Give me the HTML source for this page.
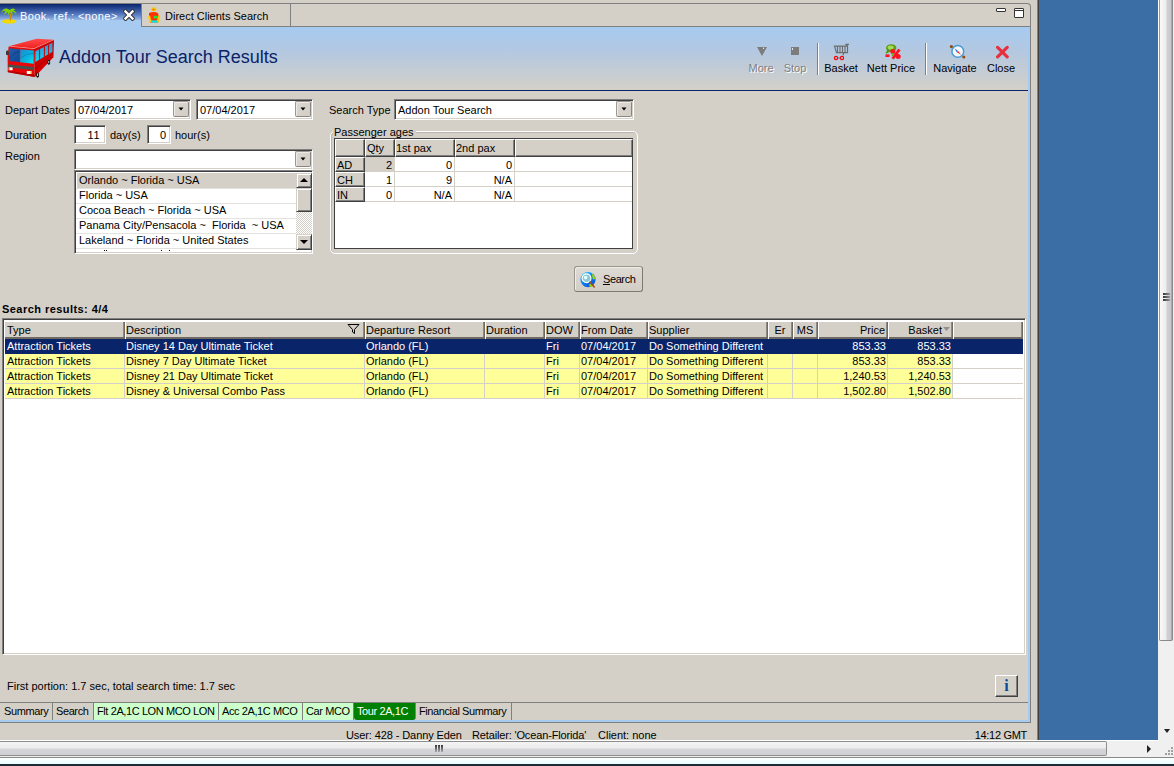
<!DOCTYPE html>
<html><head><meta charset="utf-8"><style>
*{margin:0;padding:0;box-sizing:border-box}
html,body{width:1174px;height:766px;overflow:hidden}
body{background:#D4D0C8;font-family:"Liberation Sans",sans-serif;font-size:11px;color:#000;position:relative}
.a{position:absolute}
.t{position:absolute;white-space:nowrap;line-height:13px}
</style></head><body>
<div class="a" style="left:1037px;top:0px;width:1px;height:766px;background:#808080"></div>
<div class="a" style="left:1038px;top:0px;width:1px;height:740px;background:#404040"></div>
<div class="a" style="left:1039px;top:0px;width:119px;height:740px;background:#3A6EA5"></div>
<div class="a" style="left:1158px;top:0px;width:16px;height:741px;background:#F0F0F0"></div>
<div class="a" style="left:1158px;top:0px;width:1px;height:640px;background:#fff"></div>
<div class="a" style="left:1159px;top:0px;width:14px;height:641px;background:linear-gradient(to right,#9a9a9a 0,#9a9a9a 1px,#f8f8f8 1px,#ececec 7px,#d0d0d6 8px,#c8c8cc 12px,#8a8a8a 13px);border-bottom:1px solid #8a8a8a;border-radius:0 0 2px 2px"></div>
<div class="a" style="left:1163px;top:293px;width:7px;height:2px;background:linear-gradient(to right,#333,#999)"></div>
<div class="a" style="left:1163px;top:296px;width:7px;height:2px;background:linear-gradient(to right,#333,#999)"></div>
<div class="a" style="left:1163px;top:299px;width:7px;height:2px;background:linear-gradient(to right,#333,#999)"></div>
<div class="a" style="left:1164px;top:729px;width:0;height:0;border-left:3.5px solid transparent;border-right:3.5px solid transparent;border-top:4px solid #222"></div>
<div class="a" style="left:0px;top:740px;width:1158px;height:1px;background:#fff"></div>
<div class="a" style="left:0px;top:741px;width:1174px;height:16px;background:#F0F0F0"></div>
<div class="a" style="left:0px;top:741px;width:1107px;height:15px;background:linear-gradient(#f4f4f4,#ececec 45%,#d6d6da 55%,#cfcfd3);border:1px solid #8e8e8e;border-left:none;border-radius:0 2px 2px 0"></div>
<div class="a" style="left:435px;top:745px;width:2px;height:7px;background:linear-gradient(#333,#aaa)"></div>
<div class="a" style="left:438px;top:745px;width:2px;height:7px;background:linear-gradient(#333,#aaa)"></div>
<div class="a" style="left:441px;top:745px;width:2px;height:7px;background:linear-gradient(#333,#aaa)"></div>
<div class="a" style="left:1147px;top:745px;width:0;height:0;border-top:4px solid transparent;border-bottom:4px solid transparent;border-left:4px solid #222"></div>
<div class="a" style="left:0px;top:757px;width:1174px;height:1px;background:#8a8a8a"></div>
<div class="a" style="left:0px;top:758px;width:1174px;height:6px;background:linear-gradient(#fff,#e6fbff)"></div>
<div class="a" style="left:0px;top:764px;width:1174px;height:2px;background:#1e2a36"></div>
<div class="a" style="left:-2px;top:3px;width:1033px;height:720px;border-top:1px solid #808080;border-right:1px solid #808080;border-top-right-radius:4px"></div>
<div class="a" style="left:0px;top:4px;width:141px;height:23px;background:linear-gradient(#0A246A 0px,#2c4c98 5px,#5c80c4 11px,#98b8e6 16px,#A6CAF0 16px)"></div>
<div class="a" style="left:141px;top:4px;width:150px;height:23px;background:#D4D0C8;border-left:1px solid #808080;border-right:1px solid #808080;border-bottom:1px solid #808080"></div>
<div class="a" style="left:291px;top:26px;width:739px;height:1px;background:#808080"></div>
<div class="t" style="left:20px;top:10px;color:#fff;letter-spacing:0.4px">Book. ref.: &lt;none&gt;</div>
<div class="t" style="left:165px;top:10px;">Direct Clients Search</div>
<div class="a" style="left:996px;top:8px;width:10px;height:4px;background:#fff;border:1px solid #333;border-radius:1px"></div>
<div class="a" style="left:1014px;top:8px;width:10px;height:10px;background:linear-gradient(#fff 0 1px,#333 1px 2px,#fff 2px);border:1px solid #333;border-radius:1px"></div>
<div class="a" style="left:0px;top:27px;width:1030px;height:63px;background:linear-gradient(#A6CAF0 0%,#b4c8e0 40%,#D4D0C8 100%)"></div>
<div class="a" style="left:0px;top:90px;width:1028px;height:1px;background:#0A246A"></div>
<div class="a" style="left:1028px;top:27px;width:2px;height:694px;background:#A6CAF0"></div>
<div class="t" style="left:59px;top:47px;font-size:18px;color:#0A2268;line-height:20px">Addon Tour Search Results</div>
<div class="t" style="left:721px;width:80px;text-align:center;top:62px;color:#808080;text-shadow:1px 1px 0 #fff">More</div>
<div class="t" style="left:755px;width:80px;text-align:center;top:62px;color:#808080;text-shadow:1px 1px 0 #fff">Stop</div>
<div class="t" style="left:801px;width:80px;text-align:center;top:62px;">Basket</div>
<div class="t" style="left:851px;width:80px;text-align:center;top:62px;">Nett Price</div>
<div class="t" style="left:915px;width:80px;text-align:center;top:62px;">Navigate</div>
<div class="t" style="left:961px;width:80px;text-align:center;top:62px;">Close</div>
<div class="a" style="left:817px;top:43px;width:1px;height:32px;background:#808080;box-shadow:1px 0 0 #fff"></div>
<div class="a" style="left:925px;top:43px;width:1px;height:32px;background:#808080;box-shadow:1px 0 0 #fff"></div>
<div class="t" style="left:5px;top:104px;">Depart Dates</div>
<div class="a" style="left:74px;top:99px;width:117px;height:21px;background:#fff;border-top:1px solid #808080;border-left:1px solid #808080;border-right:1px solid #fff;border-bottom:1px solid #fff;box-shadow:inset 1px 1px 0 #404040, inset -1px -1px 0 #D4D0C8"></div>
<div class="a" style="left:173px;top:101px;width:16px;height:16px;background:linear-gradient(135deg,#dcd8d2,#d2cec6);border-radius:2px;border:1px solid #9c9890;border-right-color:#8a867e;border-bottom-color:#8a867e;box-shadow:inset 1px 1px 0 #eeebe6"></div>
<svg class="a" style="left:178px;top:107px" width="6" height="4"><path d="M0.5 0.5 H5.5 L3 3.5 Z" fill="#000"/></svg>
<div class="t" style="left:78px;top:104px;">07/04/2017</div>
<div class="a" style="left:196px;top:99px;width:117px;height:21px;background:#fff;border-top:1px solid #808080;border-left:1px solid #808080;border-right:1px solid #fff;border-bottom:1px solid #fff;box-shadow:inset 1px 1px 0 #404040, inset -1px -1px 0 #D4D0C8"></div>
<div class="a" style="left:295px;top:101px;width:16px;height:16px;background:linear-gradient(135deg,#dcd8d2,#d2cec6);border-radius:2px;border:1px solid #9c9890;border-right-color:#8a867e;border-bottom-color:#8a867e;box-shadow:inset 1px 1px 0 #eeebe6"></div>
<svg class="a" style="left:300px;top:107px" width="6" height="4"><path d="M0.5 0.5 H5.5 L3 3.5 Z" fill="#000"/></svg>
<div class="t" style="left:200px;top:104px;">07/04/2017</div>
<div class="t" style="left:5px;top:129px;">Duration</div>
<div class="a" style="left:74px;top:125px;width:32px;height:19px;background:#fff;border-top:1px solid #808080;border-left:1px solid #808080;border-right:1px solid #fff;border-bottom:1px solid #fff;box-shadow:inset 1px 1px 0 #404040, inset -1px -1px 0 #D4D0C8"></div>
<div class="t" style="left:-200px;width:300px;text-align:right;top:129px;letter-spacing:0.5px">11</div>
<div class="t" style="left:110px;top:129px;">day(s)</div>
<div class="a" style="left:147px;top:125px;width:24px;height:19px;background:#fff;border-top:1px solid #808080;border-left:1px solid #808080;border-right:1px solid #fff;border-bottom:1px solid #fff;box-shadow:inset 1px 1px 0 #404040, inset -1px -1px 0 #D4D0C8"></div>
<div class="t" style="left:-134px;width:300px;text-align:right;top:129px;">0</div>
<div class="t" style="left:175px;top:129px;">hour(s)</div>
<div class="t" style="left:5px;top:150px;">Region</div>
<div class="a" style="left:74px;top:149px;width:239px;height:21px;background:#fff;border-top:1px solid #808080;border-left:1px solid #808080;border-right:1px solid #fff;border-bottom:1px solid #fff;box-shadow:inset 1px 1px 0 #404040, inset -1px -1px 0 #D4D0C8"></div>
<div class="a" style="left:295px;top:151px;width:16px;height:16px;background:linear-gradient(135deg,#dcd8d2,#d2cec6);border-radius:2px;border:1px solid #9c9890;border-right-color:#8a867e;border-bottom-color:#8a867e;box-shadow:inset 1px 1px 0 #eeebe6"></div>
<svg class="a" style="left:300px;top:157px" width="6" height="4"><path d="M0.5 0.5 H5.5 L3 3.5 Z" fill="#000"/></svg>
<div class="a" style="left:74px;top:170px;width:239px;height:84px;background:#fff;border-top:1px solid #808080;border-left:1px solid #808080;border-right:1px solid #fff;border-bottom:1px solid #fff;box-shadow:inset 1px 1px 0 #404040, inset -1px -1px 0 #D4D0C8"></div>
<div class="a" style="left:77px;top:173px;width:219px;height:15px;background:#D4D0C8"></div>
<div class="t" style="left:79px;top:174px;">Orlando ~ Florida ~ USA</div>
<div class="a" style="left:76px;top:188px;width:220px;height:1px;background:#e4e2de"></div>
<div class="t" style="left:79px;top:189px;">Florida ~ USA</div>
<div class="a" style="left:76px;top:203px;width:220px;height:1px;background:#e4e2de"></div>
<div class="t" style="left:79px;top:204px;">Cocoa Beach ~ Florida ~ USA</div>
<div class="a" style="left:76px;top:218px;width:220px;height:1px;background:#e4e2de"></div>
<div class="t" style="left:79px;top:219px;">Panama City/Pensacola ~&nbsp; Florida&nbsp; ~ USA</div>
<div class="a" style="left:76px;top:233px;width:220px;height:1px;background:#e4e2de"></div>
<div class="t" style="left:79px;top:234px;">Lakeland ~ Florida ~ United States</div>
<div class="a" style="left:76px;top:248px;width:220px;height:1px;background:#e4e2de"></div>
<div class="t" style="left:329px;top:104px;">Search Type</div>
<div class="a" style="left:394px;top:99px;width:240px;height:21px;background:#fff;border-top:1px solid #808080;border-left:1px solid #808080;border-right:1px solid #fff;border-bottom:1px solid #fff;box-shadow:inset 1px 1px 0 #404040, inset -1px -1px 0 #D4D0C8"></div>
<div class="a" style="left:616px;top:101px;width:16px;height:16px;background:linear-gradient(135deg,#dcd8d2,#d2cec6);border-radius:2px;border:1px solid #9c9890;border-right-color:#8a867e;border-bottom-color:#8a867e;box-shadow:inset 1px 1px 0 #eeebe6"></div>
<svg class="a" style="left:621px;top:107px" width="6" height="4"><path d="M0.5 0.5 H5.5 L3 3.5 Z" fill="#000"/></svg>
<div class="t" style="left:398px;top:104px;">Addon Tour Search</div>
<div class="t" style="left:334px;top:126px;">Passenger ages</div>
<div class="a" style="left:574px;top:266px;width:69px;height:26px;background:linear-gradient(#dedad4,#d2cec6);border:1px solid #9a968e;border-bottom-color:#7e7a72;border-right-color:#7e7a72;border-radius:3px;box-shadow:inset 1px 1px 0 #f0eee8"></div>
<div class="t" style="left:603px;top:273px;letter-spacing:-0.4px"><u>S</u>earch</div>
<div class="t" style="left:2px;top:303px;font-weight:bold;letter-spacing:0.45px">Search results: 4/4</div>
<div class="a" style="left:2px;top:318px;width:1024px;height:337px;background:#fff;border-top:1px solid #808080;border-left:1px solid #808080;border-right:1px solid #fff;border-bottom:1px solid #fff;box-shadow:inset 1px 1px 0 #404040, inset -1px -1px 0 #D4D0C8"></div>
<div class="a" style="left:4px;top:320px;width:121px;height:19px;background:#D4D0C8;border-top:2px solid #fff;border-left:1px solid #fff;box-shadow:inset -1px -2px 0 #6e6a62, inset -2px -1px 0 #8e8a82"></div>
<div class="t" style="left:7px;top:324px;">Type</div>
<div class="a" style="left:125px;top:320px;width:240px;height:19px;background:#D4D0C8;border-top:2px solid #fff;border-left:1px solid #fff;box-shadow:inset -1px -2px 0 #6e6a62, inset -2px -1px 0 #8e8a82"></div>
<div class="t" style="left:126px;top:324px;">Description</div>
<div class="a" style="left:365px;top:320px;width:120px;height:19px;background:#D4D0C8;border-top:2px solid #fff;border-left:1px solid #fff;box-shadow:inset -1px -2px 0 #6e6a62, inset -2px -1px 0 #8e8a82"></div>
<div class="t" style="left:366px;top:324px;">Departure Resort</div>
<div class="a" style="left:485px;top:320px;width:60px;height:19px;background:#D4D0C8;border-top:2px solid #fff;border-left:1px solid #fff;box-shadow:inset -1px -2px 0 #6e6a62, inset -2px -1px 0 #8e8a82"></div>
<div class="t" style="left:486px;top:324px;">Duration</div>
<div class="a" style="left:545px;top:320px;width:35px;height:19px;background:#D4D0C8;border-top:2px solid #fff;border-left:1px solid #fff;box-shadow:inset -1px -2px 0 #6e6a62, inset -2px -1px 0 #8e8a82"></div>
<div class="t" style="left:546px;top:324px;">DOW</div>
<div class="a" style="left:580px;top:320px;width:68px;height:19px;background:#D4D0C8;border-top:2px solid #fff;border-left:1px solid #fff;box-shadow:inset -1px -2px 0 #6e6a62, inset -2px -1px 0 #8e8a82"></div>
<div class="t" style="left:581px;top:324px;">From Date</div>
<div class="a" style="left:648px;top:320px;width:120px;height:19px;background:#D4D0C8;border-top:2px solid #fff;border-left:1px solid #fff;box-shadow:inset -1px -2px 0 #6e6a62, inset -2px -1px 0 #8e8a82"></div>
<div class="t" style="left:649px;top:324px;">Supplier</div>
<div class="a" style="left:768px;top:320px;width:25px;height:19px;background:#D4D0C8;border-top:2px solid #fff;border-left:1px solid #fff;box-shadow:inset -1px -2px 0 #6e6a62, inset -2px -1px 0 #8e8a82"></div>
<div class="t" style="left:768px;width:24px;text-align:center;top:324px">Er</div>
<div class="a" style="left:793px;top:320px;width:25px;height:19px;background:#D4D0C8;border-top:2px solid #fff;border-left:1px solid #fff;box-shadow:inset -1px -2px 0 #6e6a62, inset -2px -1px 0 #8e8a82"></div>
<div class="t" style="left:793px;width:24px;text-align:center;top:324px">MS</div>
<div class="a" style="left:818px;top:320px;width:70px;height:19px;background:#D4D0C8;border-top:2px solid #fff;border-left:1px solid #fff;box-shadow:inset -1px -2px 0 #6e6a62, inset -2px -1px 0 #8e8a82"></div>
<div class="t" style="left:585px;width:300px;text-align:right;top:324px;">Price</div>
<div class="a" style="left:888px;top:320px;width:65px;height:19px;background:#D4D0C8;border-top:2px solid #fff;border-left:1px solid #fff;box-shadow:inset -1px -2px 0 #6e6a62, inset -2px -1px 0 #8e8a82"></div>
<div class="t" style="left:642px;width:300px;text-align:right;top:324px;">Basket</div>
<div class="a" style="left:953px;top:320px;width:70px;height:19px;background:#D4D0C8;border-top:2px solid #fff;border-left:1px solid #fff;box-shadow:inset -1px -2px 0 #6e6a62, inset -2px -1px 0 #8e8a82"></div>
<svg class="a" style="left:347px;top:323px" width="14" height="12"><path d="M1 1.5 H12 L7.5 6.5 V10.5 L5.5 9 V6.5 Z" fill="none" stroke="#000" stroke-width="1"/></svg>
<svg class="a" style="left:943px;top:327px" width="7" height="4"><path d="M0 0 H7 L3.5 4 Z" fill="#909090"/></svg>
<div class="a" style="left:5px;top:339px;width:1018px;height:15px;background:#0A246A"></div>
<div class="t" style="left:7px;top:340px;color:#fff">Attraction Tickets</div>
<div class="t" style="left:126px;top:340px;color:#fff">Disney 14 Day Ultimate Ticket</div>
<div class="t" style="left:366px;top:340px;color:#fff">Orlando (FL)</div>
<div class="t" style="left:546px;top:340px;color:#fff">Fri</div>
<div class="t" style="left:581px;top:340px;color:#fff">07/04/2017</div>
<div class="t" style="left:649px;top:340px;color:#fff">Do Something Different</div>
<div class="t" style="left:586px;width:300px;text-align:right;top:340px;color:#fff">853.33</div>
<div class="t" style="left:651px;width:300px;text-align:right;top:340px;color:#fff">853.33</div>
<div class="a" style="left:5px;top:354px;width:947px;height:14px;background:#FFFF99"></div>
<div class="a" style="left:5px;top:368px;width:1018px;height:1px;background:#D4D0C8"></div>
<div class="a" style="left:124px;top:354px;width:1px;height:14px;background:#D4D0C8"></div>
<div class="a" style="left:364px;top:354px;width:1px;height:14px;background:#D4D0C8"></div>
<div class="a" style="left:484px;top:354px;width:1px;height:14px;background:#D4D0C8"></div>
<div class="a" style="left:544px;top:354px;width:1px;height:14px;background:#D4D0C8"></div>
<div class="a" style="left:579px;top:354px;width:1px;height:14px;background:#D4D0C8"></div>
<div class="a" style="left:647px;top:354px;width:1px;height:14px;background:#D4D0C8"></div>
<div class="a" style="left:767px;top:354px;width:1px;height:14px;background:#D4D0C8"></div>
<div class="a" style="left:792px;top:354px;width:1px;height:14px;background:#D4D0C8"></div>
<div class="a" style="left:817px;top:354px;width:1px;height:14px;background:#D4D0C8"></div>
<div class="a" style="left:887px;top:354px;width:1px;height:14px;background:#D4D0C8"></div>
<div class="a" style="left:952px;top:354px;width:1px;height:14px;background:#D4D0C8"></div>
<div class="t" style="left:7px;top:355px;color:#000">Attraction Tickets</div>
<div class="t" style="left:126px;top:355px;color:#000">Disney 7 Day Ultimate Ticket</div>
<div class="t" style="left:366px;top:355px;color:#000">Orlando (FL)</div>
<div class="t" style="left:546px;top:355px;color:#000">Fri</div>
<div class="t" style="left:581px;top:355px;color:#000">07/04/2017</div>
<div class="t" style="left:649px;top:355px;color:#000">Do Something Different</div>
<div class="t" style="left:586px;width:300px;text-align:right;top:355px;color:#000">853.33</div>
<div class="t" style="left:651px;width:300px;text-align:right;top:355px;color:#000">853.33</div>
<div class="a" style="left:5px;top:369px;width:947px;height:14px;background:#FFFF99"></div>
<div class="a" style="left:5px;top:383px;width:1018px;height:1px;background:#D4D0C8"></div>
<div class="a" style="left:124px;top:369px;width:1px;height:14px;background:#D4D0C8"></div>
<div class="a" style="left:364px;top:369px;width:1px;height:14px;background:#D4D0C8"></div>
<div class="a" style="left:484px;top:369px;width:1px;height:14px;background:#D4D0C8"></div>
<div class="a" style="left:544px;top:369px;width:1px;height:14px;background:#D4D0C8"></div>
<div class="a" style="left:579px;top:369px;width:1px;height:14px;background:#D4D0C8"></div>
<div class="a" style="left:647px;top:369px;width:1px;height:14px;background:#D4D0C8"></div>
<div class="a" style="left:767px;top:369px;width:1px;height:14px;background:#D4D0C8"></div>
<div class="a" style="left:792px;top:369px;width:1px;height:14px;background:#D4D0C8"></div>
<div class="a" style="left:817px;top:369px;width:1px;height:14px;background:#D4D0C8"></div>
<div class="a" style="left:887px;top:369px;width:1px;height:14px;background:#D4D0C8"></div>
<div class="a" style="left:952px;top:369px;width:1px;height:14px;background:#D4D0C8"></div>
<div class="t" style="left:7px;top:370px;color:#000">Attraction Tickets</div>
<div class="t" style="left:126px;top:370px;color:#000">Disney 21 Day Ultimate Ticket</div>
<div class="t" style="left:366px;top:370px;color:#000">Orlando (FL)</div>
<div class="t" style="left:546px;top:370px;color:#000">Fri</div>
<div class="t" style="left:581px;top:370px;color:#000">07/04/2017</div>
<div class="t" style="left:649px;top:370px;color:#000">Do Something Different</div>
<div class="t" style="left:586px;width:300px;text-align:right;top:370px;color:#000">1,240.53</div>
<div class="t" style="left:651px;width:300px;text-align:right;top:370px;color:#000">1,240.53</div>
<div class="a" style="left:5px;top:384px;width:947px;height:14px;background:#FFFF99"></div>
<div class="a" style="left:5px;top:398px;width:1018px;height:1px;background:#D4D0C8"></div>
<div class="a" style="left:124px;top:384px;width:1px;height:14px;background:#D4D0C8"></div>
<div class="a" style="left:364px;top:384px;width:1px;height:14px;background:#D4D0C8"></div>
<div class="a" style="left:484px;top:384px;width:1px;height:14px;background:#D4D0C8"></div>
<div class="a" style="left:544px;top:384px;width:1px;height:14px;background:#D4D0C8"></div>
<div class="a" style="left:579px;top:384px;width:1px;height:14px;background:#D4D0C8"></div>
<div class="a" style="left:647px;top:384px;width:1px;height:14px;background:#D4D0C8"></div>
<div class="a" style="left:767px;top:384px;width:1px;height:14px;background:#D4D0C8"></div>
<div class="a" style="left:792px;top:384px;width:1px;height:14px;background:#D4D0C8"></div>
<div class="a" style="left:817px;top:384px;width:1px;height:14px;background:#D4D0C8"></div>
<div class="a" style="left:887px;top:384px;width:1px;height:14px;background:#D4D0C8"></div>
<div class="a" style="left:952px;top:384px;width:1px;height:14px;background:#D4D0C8"></div>
<div class="t" style="left:7px;top:385px;color:#000">Attraction Tickets</div>
<div class="t" style="left:126px;top:385px;color:#000">Disney &amp; Universal Combo Pass</div>
<div class="t" style="left:366px;top:385px;color:#000">Orlando (FL)</div>
<div class="t" style="left:546px;top:385px;color:#000">Fri</div>
<div class="t" style="left:581px;top:385px;color:#000">07/04/2017</div>
<div class="t" style="left:649px;top:385px;color:#000">Do Something Different</div>
<div class="t" style="left:586px;width:300px;text-align:right;top:385px;color:#000">1,502.80</div>
<div class="t" style="left:651px;width:300px;text-align:right;top:385px;color:#000">1,502.80</div>
<div class="a" style="left:330px;top:131px;width:308px;height:123px;border:1px solid #fff;border-radius:5px;box-shadow:inset 1px 1px 0 #b8b4ac"></div>
<div class="a" style="left:333px;top:126px;width:83px;height:10px;background:#D4D0C8"></div>
<div class="t" style="left:334px;top:126px;">Passenger ages</div>
<div class="a" style="left:334px;top:138px;width:299px;height:111px;background:#fff;border:1px solid #404040"></div>
<div class="a" style="left:335px;top:139px;width:30px;height:18px;background:#D4D0C8;border-top:1px solid #fff;border-left:1px solid #fff;border-bottom:1px solid #404040;border-right:1px solid #404040;box-shadow:inset -1px -1px 0 #808080"></div>
<div class="a" style="left:365px;top:139px;width:30px;height:18px;background:#D4D0C8;border-top:1px solid #fff;border-left:1px solid #fff;border-bottom:1px solid #404040;border-right:1px solid #404040;box-shadow:inset -1px -1px 0 #808080"></div>
<div class="a" style="left:395px;top:139px;width:60px;height:18px;background:#D4D0C8;border-top:1px solid #fff;border-left:1px solid #fff;border-bottom:1px solid #404040;border-right:1px solid #404040;box-shadow:inset -1px -1px 0 #808080"></div>
<div class="a" style="left:455px;top:139px;width:60px;height:18px;background:#D4D0C8;border-top:1px solid #fff;border-left:1px solid #fff;border-bottom:1px solid #404040;border-right:1px solid #404040;box-shadow:inset -1px -1px 0 #808080"></div>
<div class="a" style="left:515px;top:139px;width:118px;height:18px;background:#D4D0C8;border-top:1px solid #fff;border-left:1px solid #fff;border-bottom:1px solid #404040;border-right:1px solid #404040;box-shadow:inset -1px -1px 0 #808080"></div>
<div class="t" style="left:367px;top:142px;">Qty</div>
<div class="t" style="left:396px;top:142px;">1st pax</div>
<div class="t" style="left:456px;top:142px;">2nd pax</div>
<div class="a" style="left:335px;top:157px;width:30px;height:15px;background:#D4D0C8;border-top:1px solid #fff;border-left:1px solid #fff;border-bottom:1px solid #404040;border-right:1px solid #404040;box-shadow:inset -1px -1px 0 #808080"></div>
<div class="t" style="left:337px;top:159px;">AD</div>
<div class="a" style="left:365px;top:157px;width:29px;height:14px;background:#D4D0C8"></div>
<div class="a" style="left:394px;top:157px;width:1px;height:15px;background:#D4D0C8"></div>
<div class="a" style="left:454px;top:157px;width:1px;height:15px;background:#D4D0C8"></div>
<div class="a" style="left:514px;top:157px;width:1px;height:15px;background:#D4D0C8"></div>
<div class="a" style="left:365px;top:171px;width:267px;height:1px;background:#D4D0C8"></div>
<div class="t" style="left:92px;width:300px;text-align:right;top:159px;">2</div>
<div class="t" style="left:152px;width:300px;text-align:right;top:159px;">0</div>
<div class="t" style="left:212px;width:300px;text-align:right;top:159px;">0</div>
<div class="a" style="left:335px;top:172px;width:30px;height:15px;background:#D4D0C8;border-top:1px solid #fff;border-left:1px solid #fff;border-bottom:1px solid #404040;border-right:1px solid #404040;box-shadow:inset -1px -1px 0 #808080"></div>
<div class="t" style="left:337px;top:174px;">CH</div>
<div class="a" style="left:394px;top:172px;width:1px;height:15px;background:#D4D0C8"></div>
<div class="a" style="left:454px;top:172px;width:1px;height:15px;background:#D4D0C8"></div>
<div class="a" style="left:514px;top:172px;width:1px;height:15px;background:#D4D0C8"></div>
<div class="a" style="left:365px;top:186px;width:267px;height:1px;background:#D4D0C8"></div>
<div class="t" style="left:92px;width:300px;text-align:right;top:174px;">1</div>
<div class="t" style="left:152px;width:300px;text-align:right;top:174px;">9</div>
<div class="t" style="left:212px;width:300px;text-align:right;top:174px;">N/A</div>
<div class="a" style="left:335px;top:187px;width:30px;height:15px;background:#D4D0C8;border-top:1px solid #fff;border-left:1px solid #fff;border-bottom:1px solid #404040;border-right:1px solid #404040;box-shadow:inset -1px -1px 0 #808080"></div>
<div class="t" style="left:337px;top:189px;">IN</div>
<div class="a" style="left:394px;top:187px;width:1px;height:15px;background:#D4D0C8"></div>
<div class="a" style="left:454px;top:187px;width:1px;height:15px;background:#D4D0C8"></div>
<div class="a" style="left:514px;top:187px;width:1px;height:15px;background:#D4D0C8"></div>
<div class="a" style="left:365px;top:201px;width:267px;height:1px;background:#D4D0C8"></div>
<div class="t" style="left:92px;width:300px;text-align:right;top:189px;">0</div>
<div class="t" style="left:152px;width:300px;text-align:right;top:189px;">N/A</div>
<div class="t" style="left:212px;width:300px;text-align:right;top:189px;">N/A</div>
<div class="t" style="left:7px;top:680px;">First portion: 1.7 sec, total search time: 1.7 sec</div>
<div class="a" style="left:995px;top:675px;width:23px;height:22px;background:#D4D0C8;border-top:1px solid #fff;border-left:1px solid #fff;border-right:1px solid #404040;border-bottom:1px solid #404040;box-shadow:inset -1px -1px 0 #808080"></div>
<div class="t" style="left:995px;width:23px;text-align:center;top:679px;font-family:'Liberation Serif',serif;font-weight:bold;font-size:16px;color:#0A4A9A">i</div>
<div class="a" style="left:0px;top:702px;width:1028px;height:1px;background:#808080"></div>
<div class="a" style="left:0px;top:720px;width:1030px;height:2px;background:#A6CAF0"></div>
<div class="a" style="left:0px;top:722px;width:1030px;height:1px;background:#808080"></div>
<div class="t" style="left:346px;top:729px;letter-spacing:-0.1px">User: 428 - Danny Eden</div>
<div class="t" style="left:472px;top:729px;letter-spacing:-0.15px">Retailer: 'Ocean-Florida'</div>
<div class="t" style="left:598px;top:729px;">Client: none</div>
<div class="t" style="left:727px;width:300px;text-align:right;top:729px;letter-spacing:-0.3px">14:12 GMT</div>
<div class="a" style="left:0px;top:703px;width:53px;height:17px;background:#D4D0C8;border-right:1px solid #808080"></div>
<div class="t" style="left:4px;top:705px;color:#000;letter-spacing:-0.4px">Summary</div>
<div class="a" style="left:53px;top:703px;width:41px;height:17px;background:#D4D0C8;border-right:1px solid #808080"></div>
<div class="t" style="left:56px;top:705px;color:#000;letter-spacing:-0.4px">Search</div>
<div class="a" style="left:94px;top:703px;width:125px;height:17px;background:#CCFFCC;border-right:1px solid #808080"></div>
<div class="t" style="left:97px;top:705px;color:#000;letter-spacing:-0.4px">Flt 2A,1C LON MCO LON</div>
<div class="a" style="left:219px;top:703px;width:84px;height:17px;background:#CCFFCC;border-right:1px solid #808080"></div>
<div class="t" style="left:222px;top:705px;color:#000;letter-spacing:-0.4px">Acc 2A,1C MCO</div>
<div class="a" style="left:303px;top:703px;width:51px;height:17px;background:#CCFFCC;border-right:1px solid #808080"></div>
<div class="t" style="left:306px;top:705px;color:#000;letter-spacing:-0.4px">Car MCO</div>
<div class="a" style="left:354px;top:703px;width:62px;height:17px;background:#008000;border-radius:0 0 3px 3px;border-right:1px solid #808080"></div>
<div class="t" style="left:357px;top:705px;color:#fff;letter-spacing:-0.4px">Tour 2A,1C</div>
<div class="a" style="left:416px;top:703px;width:96px;height:17px;background:#D4D0C8;border-right:1px solid #808080"></div>
<div class="t" style="left:419px;top:705px;color:#000;letter-spacing:-0.4px">Financial Summary</div>
<div class="a" style="left:296px;top:173px;width:16px;height:15px;background:#D4D0C8;border-top:1px solid #D4D0C8;border-left:1px solid #D4D0C8;border-right:1px solid #404040;border-bottom:1px solid #404040;box-shadow:inset 1px 1px 0 #fff, inset -1px -1px 0 #808080"></div>
<div class="a" style="left:300px;top:178px;width:0;height:0;border-left:4px solid transparent;border-right:4px solid transparent;border-bottom:4px solid #000"></div>
<div class="a" style="left:296px;top:188px;width:16px;height:24px;background:#D4D0C8;border-top:1px solid #D4D0C8;border-left:1px solid #D4D0C8;border-right:1px solid #404040;border-bottom:1px solid #404040;box-shadow:inset 1px 1px 0 #fff, inset -1px -1px 0 #808080"></div>
<div class="a" style="left:296px;top:212px;width:16px;height:22px;background:repeating-conic-gradient(#fff 0 25%,#D4D0C8 0 50%) 0 0/2px 2px"></div>
<div class="a" style="left:296px;top:234px;width:16px;height:16px;background:#D4D0C8;border-top:1px solid #D4D0C8;border-left:1px solid #D4D0C8;border-right:1px solid #404040;border-bottom:1px solid #404040;box-shadow:inset 1px 1px 0 #fff, inset -1px -1px 0 #808080"></div>
<div class="a" style="left:300px;top:240px;width:0;height:0;border-left:4px solid transparent;border-right:4px solid transparent;border-top:4px solid #000"></div>
<svg class="a" style="left:4px;top:36px" width="54" height="46" viewBox="0 0 54 46">
<defs>
<linearGradient id="wsl" x1="0" y1="0" x2="1" y2="1"><stop offset="0" stop-color="#2a5aa8"/><stop offset="1" stop-color="#0a4a98"/></linearGradient>
<linearGradient id="wsr" x1="0" y1="0" x2="1" y2="1"><stop offset="0" stop-color="#1a88d0"/><stop offset="0.6" stop-color="#08b8e0"/><stop offset="1" stop-color="#10e8f8"/></linearGradient>
<linearGradient id="sw" x1="0" y1="0" x2="0" y2="1"><stop offset="0" stop-color="#3a90d8"/><stop offset="1" stop-color="#10d8ee"/></linearGradient>
<linearGradient id="roof" x1="0" y1="0" x2="0" y2="1"><stop offset="0" stop-color="#ff4a4a"/><stop offset="1" stop-color="#f02020"/></linearGradient>
</defs>
<polygon points="5,10.2 30,12.6 50,3.8 32.6,2.8" fill="url(#roof)"/>
<polyline points="5,10.4 30,12.8 50,4" fill="none" stroke="#ff9a8a" stroke-width="0.8"/>
<polygon points="4.6,10.6 30,13 30.8,41 3.8,36 3.6,22" fill="#e80808"/>
<polygon points="30,13 50,4 49.4,21.2 30.8,41" fill="#d00000"/>
<polygon points="5.4,12.2 15.2,13.2 15.2,26 5.1,25" fill="url(#wsl)"/>
<polygon points="16.2,13.3 29.6,14.6 29.6,27.8 16.2,26.2" fill="url(#wsr)"/>
<path d="M5.4 22 Q10 16 15.2 15.5" stroke="#0a2a70" stroke-width="0.8" fill="none" opacity="0.7"/>
<path d="M16.5 22 Q22 17 29.4 17.5" stroke="#0a5a9a" stroke-width="0.7" fill="none" opacity="0.6"/>
<polygon points="31.4,15.2 48.4,6.8 48.4,15.8 31.4,26" fill="url(#sw)"/>
<line x1="35.6" y1="13.2" x2="35.6" y2="23.6" stroke="#c80000" stroke-width="1"/>
<line x1="40.4" y1="10.8" x2="40.4" y2="20.8" stroke="#c80000" stroke-width="1"/>
<line x1="44.6" y1="8.8" x2="44.6" y2="18.2" stroke="#c80000" stroke-width="1"/>
<polygon points="4.2,28.4 29.8,31 29.8,34 4.2,31.4" fill="#48504e"/>
<polygon points="3.8,34.5 30.6,38.6 30.8,41 3.8,36.2" fill="#b80000"/>
<rect x="4.8" y="31.4" width="3.8" height="2.8" fill="#fff"/><rect x="4.8" y="31.4" width="1.2" height="2.8" fill="#f0a040"/>
<rect x="22.8" y="35" width="4.6" height="3" fill="#fff"/><rect x="26.4" y="35.2" width="1.3" height="2.6" fill="#f0b000"/>
<rect x="2" y="14.6" width="2.8" height="4.6" rx="1.2" fill="#3a3a3a"/>
<polyline points="31,33 49.2,17.5" stroke="#a00000" stroke-width="0.9" fill="none"/>
<ellipse cx="33.6" cy="39" rx="1.5" ry="2.8" fill="#111"/><rect x="33.2" y="37.4" width="0.9" height="2.6" fill="#f0f0f0"/>
<ellipse cx="44.8" cy="26.4" rx="1.4" ry="2.4" fill="#111"/><rect x="44.4" y="25" width="0.8" height="2.2" fill="#f0f0f0"/>
</svg>
<svg class="a" style="left:0px;top:4px" width="20" height="22" viewBox="0 0 20 22">
<ellipse cx="9.2" cy="17.4" rx="7.2" ry="2.2" fill="#f4d800"/>
<path d="M8.6 6.5 Q10.5 11 9.6 16.4 L11 16.4 Q11.8 10.5 10 6.5 Z" fill="#d08a10"/>
<path d="M9.5 6 Q6 3.2 3 5.8 Q2 7 1.2 8.5 Q4 6.6 5.5 7.2 Q4 8.8 4.4 11 Q6.2 8.4 8 8 Q7.6 10.2 8 11.6 Q9.4 9 10.2 7.8 Q11.8 9.4 12.4 12 Q13 9.2 12 7.6 Q14.6 8.2 16.8 10.4 Q16 7.4 13.4 6 Q15 5.4 15.6 5.8 Q12.8 3 9.5 6 Z" fill="#7ed000"/>
</svg>
<svg class="a" style="left:123px;top:9px" width="12" height="12" viewBox="0 0 12 12">
<path d="M2.5 2.5 L9.5 9.5 M9.5 2.5 L2.5 9.5" stroke="#333" stroke-width="4.4" stroke-linecap="square"/>
<path d="M2.5 2.5 L9.5 9.5 M9.5 2.5 L2.5 9.5" stroke="#fff" stroke-width="2.4" stroke-linecap="square"/>
</svg>
<svg class="a" style="left:145px;top:6px" width="18" height="18" viewBox="0 0 18 18">
<ellipse cx="8.8" cy="3.2" rx="2.6" ry="2" fill="#f8c000"/><ellipse cx="8.6" cy="3.6" rx="1.2" ry="0.6" fill="#f06000"/>
<path d="M4 7 Q8.5 5.2 13 7 L14 11 L13 16.5 L5 16.5 L4 11 Z" fill="#ff3000"/>
<path d="M2.8 10 L5 9.6 L6.6 16 L4.6 16.6 Z" fill="#ffd000"/><path d="M15.2 10 L13 9.6 L11.6 16 L13.6 16.6 Z" fill="#ffc000"/>
<rect x="8.6" y="9.8" width="3.8" height="2.6" fill="#20e040"/>
<rect x="6" y="14.4" width="6.4" height="2.2" fill="#00e8f0"/>
</svg>
<svg class="a" style="left:756px;top:46px" width="12" height="11" viewBox="0 0 12 11"><path d="M1 1 H11 L6 10 Z" fill="#7c7c7c"/><rect x="7" y="1.6" width="1" height="1.4" fill="#e8e8e8"/></svg>
<svg class="a" style="left:791px;top:47px" width="9" height="9" viewBox="0 0 9 9"><rect x="0" y="0" width="8" height="8" fill="#7c7c7c"/><rect x="1" y="1" width="1" height="2" fill="#e8e8e8"/></svg>
<svg class="a" style="left:833px;top:43px" width="17" height="18" viewBox="0 0 17 18">
<path d="M1.5 3.2 H14.5 V9.6 H3.5 Z" fill="none" stroke="#6c6c6c" stroke-width="1.2"/>
<path d="M4.5 3.2 V9.6 M7 3.2 V9.6 M9.5 3.2 V9.6 M12 3.2 V9.6" stroke="#6c6c6c" stroke-width="1.1"/>
<path d="M12.3 1.4 H16 M13 1.4 L14.5 3.2 M10.8 9.6 L10 12.4" stroke="#6c6c6c" stroke-width="1.1" fill="none"/>
<circle cx="3" cy="15" r="1.6" fill="none" stroke="#ff0000" stroke-width="1.2"/>
<circle cx="9" cy="15" r="1.6" fill="none" stroke="#ff0000" stroke-width="1.2"/>
<line x1="4.6" y1="15" x2="7.4" y2="15" stroke="#667" stroke-width="1"/>
</svg>
<svg class="a" style="left:884px;top:43px" width="18" height="17" viewBox="0 0 18 17">
<ellipse cx="7.2" cy="5" rx="5.2" ry="3.8" fill="#5aa010"/>
<ellipse cx="6.6" cy="4.4" rx="3" ry="2" fill="#a8d860"/>
<path d="M3.5 6.5 Q2 9 1.5 10.5 L4 10 Q5 8.5 7 8 Z" fill="#4a9a10"/>
<rect x="1.5" y="11.4" width="4" height="2.6" fill="#ff1020"/>
<circle cx="8.8" cy="8.6" r="2.5" fill="#ff1020"/><circle cx="14.2" cy="13.4" r="2.5" fill="#ff1020"/>
<path d="M14.2 5.8 L16.6 7.2 L9.8 16.4 L7.4 15 Z" fill="#ff1020"/>
<rect x="7.6" y="10" width="2.2" height="3" fill="#60b020" opacity="0.9"/>
</svg>
<svg class="a" style="left:948px;top:43px" width="18" height="17" viewBox="0 0 18 17">
<circle cx="9.8" cy="8.4" r="5.9" fill="#f4f8fb" stroke="#4a9ad6" stroke-width="1.5"/>
<path d="M6.5 5.2 L10 8 L8.8 9.2 Z" fill="#1e6ad0"/><path d="M10 8 L13.2 11.8 L8.8 9.2 Z" fill="#ff2010"/>
<circle cx="3.4" cy="3.6" r="1.6" fill="#8a5010"/><circle cx="15.8" cy="14" r="1.6" fill="#8a5010"/>
</svg>
<svg class="a" style="left:995px;top:45px" width="15" height="14" viewBox="0 0 15 14">
<path d="M2.6 2.4 L12.2 11.8 M12.2 2.4 L2.6 11.8" stroke="#e63040" stroke-width="3.2" stroke-linecap="round"/>
</svg>
<svg class="a" style="left:578px;top:270px" width="20" height="20" viewBox="0 0 20 20">
<defs><linearGradient id="gl" x1="0" y1="0" x2="0.8" y2="1"><stop offset="0" stop-color="#30d8ff"/><stop offset="0.5" stop-color="#0a80f0"/><stop offset="1" stop-color="#0a50d8"/></linearGradient></defs>
<circle cx="10" cy="9.6" r="7.6" fill="url(#gl)"/>
<path d="M13.5 3.5 Q17 5 17.2 9 L15 9.6 Z" fill="#9ad800"/>
<path d="M11 14.5 Q13 13 14.5 15.6 L12 17.2 Z" fill="#9ad800"/>
<circle cx="8.5" cy="8.2" r="4.4" fill="#8ac8d0" stroke="#fff" stroke-width="1.2"/>
<circle cx="7.6" cy="7.6" r="1.8" fill="#e8ffff"/>
<line x1="11.6" y1="11.6" x2="16.6" y2="17.4" stroke="#a0501a" stroke-width="1.6"/>
</svg>
<div class="a" style="left:1171px;top:747px;width:2px;height:2px;background:#a0a0a0"></div>
<div class="a" style="left:1168px;top:750px;width:2px;height:2px;background:#a0a0a0"></div>
<div class="a" style="left:1171px;top:750px;width:2px;height:2px;background:#a0a0a0"></div>
<div class="a" style="left:1165px;top:753px;width:2px;height:2px;background:#a0a0a0"></div>
<div class="a" style="left:1168px;top:753px;width:2px;height:2px;background:#a0a0a0"></div>
<div class="a" style="left:1171px;top:753px;width:2px;height:2px;background:#a0a0a0"></div>
<div class="a" style="left:104px;top:250px;width:1px;height:1px;background:#000"></div>
<div class="a" style="left:106px;top:250px;width:1px;height:1px;background:#000"></div>
<div class="a" style="left:161px;top:250px;width:1px;height:1px;background:#000"></div>
<div class="a" style="left:169px;top:250px;width:1px;height:1px;background:#000"></div>
</body></html>
